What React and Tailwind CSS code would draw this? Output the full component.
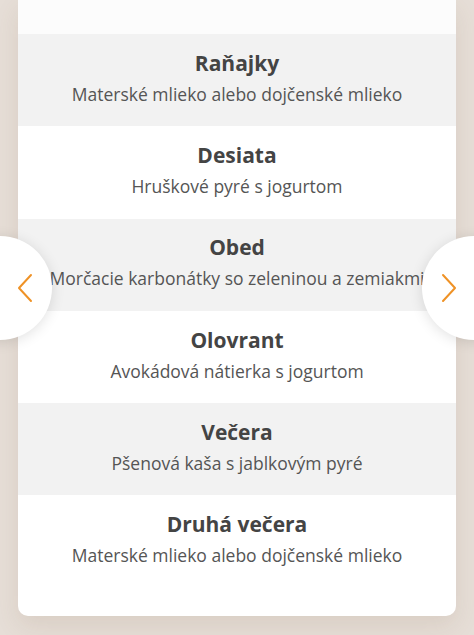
const meals = [
  { name: 'Raňajky', dish: 'Materské mlieko alebo dojčenské mlieko' },
  { name: 'Desiata', dish: 'Hruškové pyré s jogurtom' },
  { name: 'Obed', dish: 'Morčacie karbonátky so zeleninou a zemiakmi' },
  { name: 'Olovrant', dish: 'Avokádová nátierka s jogurtom' },
  { name: 'Večera', dish: 'Pšenová kaša s jablkovým pyré' },
  { name: 'Druhá večera', dish: 'Materské mlieko alebo dojčenské mlieko' },
];

function Chevron({ dir }) {
  return (
    <svg width="18" height="30" viewBox="0 0 18 30" fill="none">
      <path
        d={dir === 'left' ? 'M15 2 L3 15 L15 28' : 'M3 2 L15 15 L3 28'}
        stroke="#ef9226"
        strokeWidth="2"
        strokeLinecap="round"
        strokeLinejoin="round"
      />
    </svg>
  );
}

export default function App() {
  return (
    <div
      className="relative h-[635px] w-[474px] overflow-hidden bg-[#e6ded7] px-[18px]"
      style={{ fontFamily: '"Open Sans", "DejaVu Sans", sans-serif' }}
    >
      <div className="overflow-hidden rounded-b-[10px] bg-white pb-[28px] shadow-[0_10px_24px_rgba(120,90,60,0.12)]">
        <div className="h-[34px] bg-[#fcfcfc]" />
        {meals.map((meal, i) => (
          <div
            key={meal.name}
            className={`flex h-[92.3px] flex-col items-center justify-center overflow-hidden whitespace-nowrap pb-[6px] text-center ${
              i % 2 === 0 ? 'bg-[#f2f2f2]' : 'bg-white'
            }`}
          >
            <div className="text-[21px] font-bold leading-[28px] text-[#444444]">{meal.name}</div>
            <div className="mt-[5px] text-[17.5px] leading-[24px] text-[#555555]">{meal.dish}</div>
          </div>
        ))}
      </div>

      <button className="absolute left-[-52px] top-[236px] flex h-[104px] w-[104px] items-center justify-end rounded-full bg-white pr-[18px] shadow-[0_2px_14px_rgba(0,0,0,0.12)]">
        <Chevron dir="left" />
      </button>
      <button className="absolute right-[-52px] top-[236px] flex h-[104px] w-[104px] items-center justify-start rounded-full bg-white pl-[18px] shadow-[0_2px_14px_rgba(0,0,0,0.12)]">
        <Chevron dir="right" />
      </button>
    </div>
  );
}
